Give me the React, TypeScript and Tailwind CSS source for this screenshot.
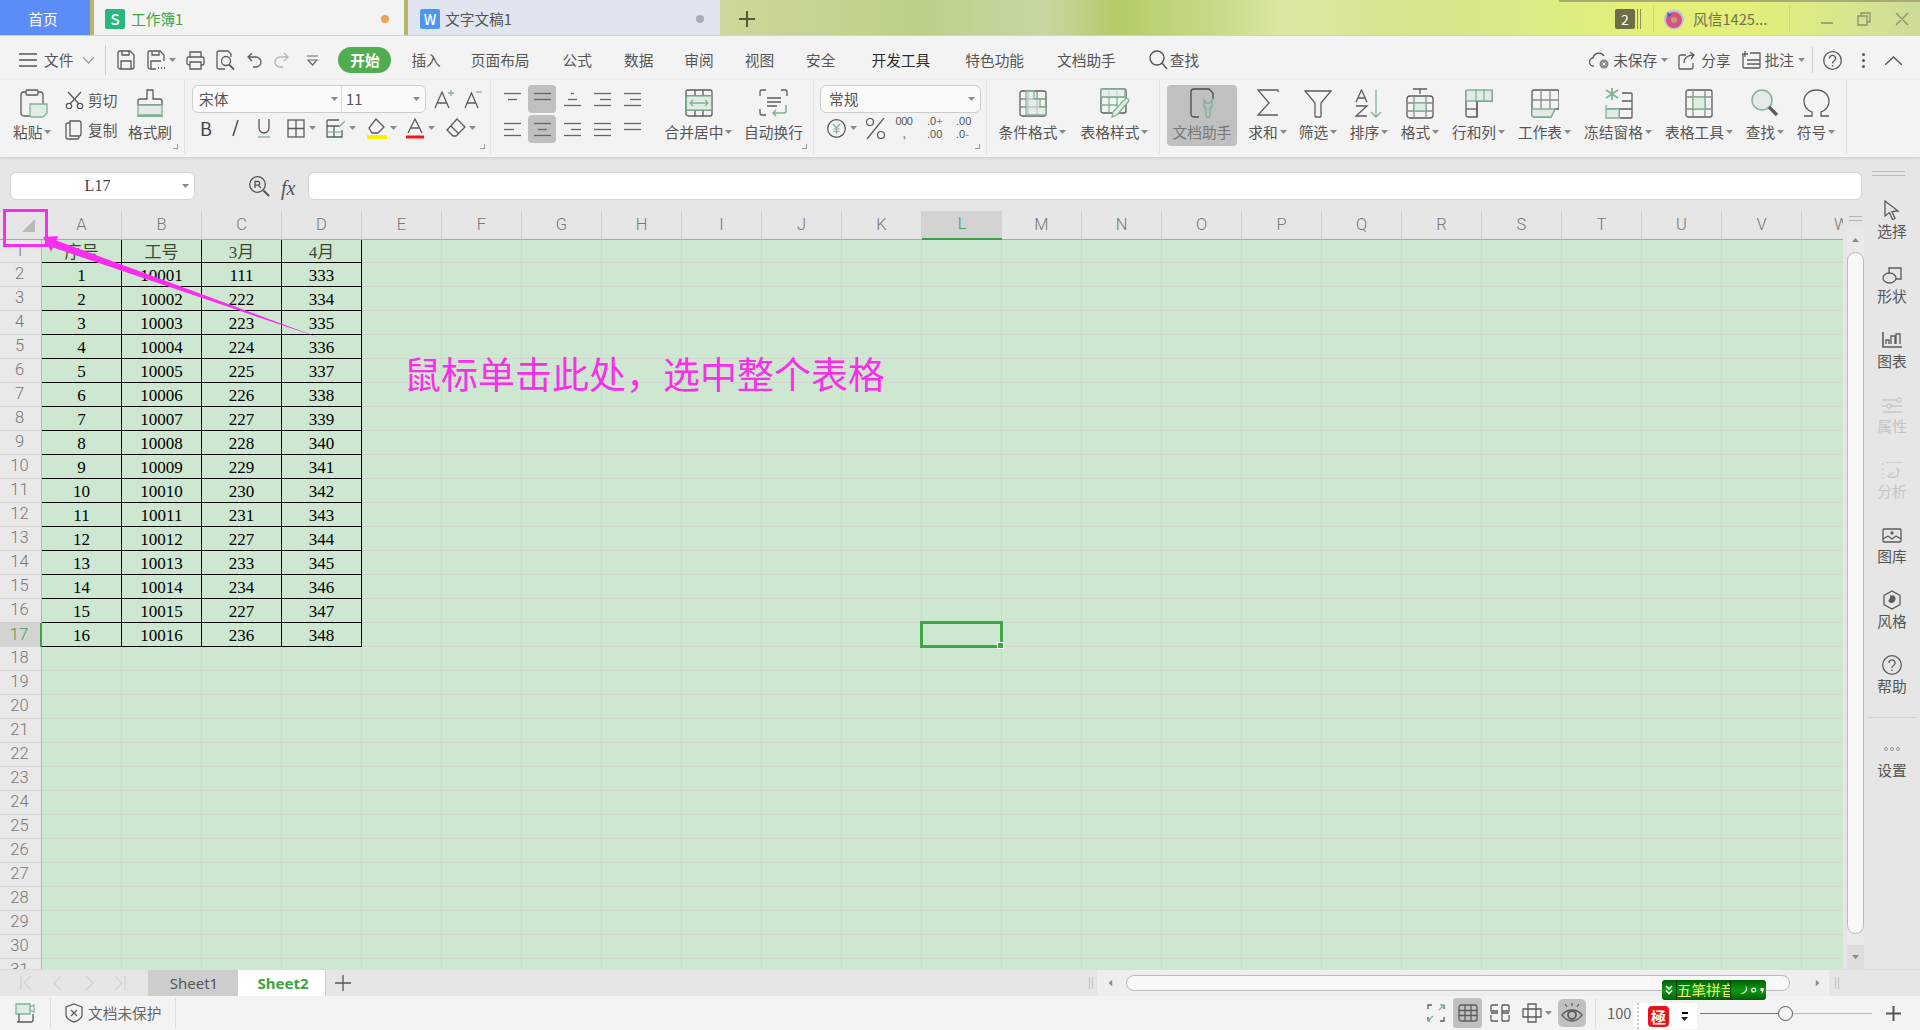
import type { ReactNode } from "react";

const GREEN = "#7fb394";
const GREY = "#5c5c5c";

function I({ w = 24, h = 24, children }: { w?: number; h?: number; children: ReactNode }) {
  return (
    <svg width={w} height={h} viewBox={`0 0 ${w} ${h}`} fill="none" stroke={GREY} strokeWidth={1.3} className="shrink-0">
      {children}
    </svg>
  );
}

function Caret({ color = "#8a8a8a" }: { color?: string }) {
  return (
    <svg width="7" height="4" viewBox="0 0 7 4" className="shrink-0">
      <path d="M0 0h7L3.5 4z" fill={color} />
    </svg>
  );
}

// ribbon icons
const PasteIcon = (
  <I w={28} h={29}>
    <rect x="1" y="3" width="22" height="24" rx="3" />
    <rect x="6" y="1" width="12" height="5" rx="1" fill="#f3f3f3" />
    <path d="M10 15h17v9l-4 4H12a2 2 0 0 1-2-2z" fill="#e4ebe6" stroke={GREEN} />
  </I>
);
const BrushIcon = (
  <I w={26} h={29}>
    <path d="M10 1h6v9h7a2 2 0 0 1 2 2v4H1v-4a2 2 0 0 1 2-2h7z" />
    <path d="M1 16h24v10H1z" fill="#e4ebe6" stroke={GREEN} />
    <path d="M0 27h26" stroke={GREEN} strokeWidth="2" />
  </I>
);
const MergeIcon = (
  <I w={28} h={28}>
    <rect x="1" y="1" width="26" height="26" rx="2" />
    <path d="M1 7h26M1 21h26M10 1v6M18 1v6M10 21v6M18 21v6" />
    <rect x="1.5" y="7" width="25" height="14" fill="#e4ebe6" stroke={GREEN} />
    <path d="M5 14h18M8 11l-3 3 3 3M20 11l3 3-3 3" stroke={GREEN} />
  </I>
);
const WrapIcon = (
  <I w={29} h={28}>
    <path d="M7 1H3a2 2 0 0 0-2 2v4M22 1h4a2 2 0 0 1 2 2v4M1 20v4a2 2 0 0 0 2 2h4" />
    <path d="M8 9h14M8 13h14M8 17h10" />
    <path d="M27 16v6a2 2 0 0 1-2 2H14M17 21l-3 3 3 3" stroke={GREEN} strokeWidth="1.6" />
  </I>
);
const CondIcon = (
  <I w={28} h={27}>
    <rect x="1" y="1" width="26" height="25" rx="2" />
    <path d="M1 9h26M1 17h26M9 1v25M18 1v25" stroke="#8a8a8a" />
    <path d="M7 1h8v8h6v8h6v8H7z" fill="#dfeae3" fillOpacity=".6" stroke={GREEN} />
  </I>
);
const StyleIcon = (
  <I w={30} h={30}>
    <rect x="1" y="1" width="25" height="24" rx="2" />
    <path d="M1 9h25M1 17h17M9 1v24M17 1v18" stroke={GREEN} />
    <path d="M1 1h24v8H1z" fill="#e4ebe6" fillOpacity=".7" stroke={GREEN} />
    <path d="M28 11c1 1 1 2 0 3L17 27l-5 2 1-5 12-13c1-1 2-1 3 0z" fill="#e4ebe6" stroke={GREEN} />
  </I>
);
const HelperIcon = (
  <I w={25} h={30}>
    <path d="M9 29H4a3 3 0 0 1-3-3V4a3 3 0 0 1 3-3h15l4 4v6" stroke="#4a4a4a" />
    <path d="M15 12v5c0 2 1 3 2 3v7a2 2 0 0 0 4 0v-7c1 0 2-1 2-3v-5l-2 3h-4z" stroke={GREEN} strokeWidth="1.5" transform="translate(-1 0)" />
  </I>
);
const SigmaIcon = (
  <I w={24} h={28}>
    <path d="M22 3V1H2l11 13L2 26h20" />
  </I>
);
const FunnelIcon = (
  <I w={28} h={29}>
    <path d="M1 2h26L17 14v13a1 1 0 0 1-1 1h-4a1 1 0 0 1-1-1V14z" />
  </I>
);
const SortIcon = (
  <I w={28} h={29}>
    <path d="M1 13L6.500 1 12 13M3 9h7" />
    <path d="M1 17h11L1 27h11" />
    <path d="M21 1v27M16 23l5 5 5-5" stroke={GREEN} />
  </I>
);
const FormatIcon = (
  <I w={28} h={31}>
    <path d="M7 1h14M14 1v5" />
    <rect x="1" y="8" width="26" height="22" rx="3" />
    <path d="M1 15h26M1 23h26M8 8v22M20 8v22" stroke="#8a8a8a" />
    <rect x="8" y="15" width="12" height="8" fill="#dfeae3" stroke={GREEN} />
  </I>
);
const RowColIcon = (
  <I w={28} h={30}>
    <path d="M3 3h24v10H12v16H3a2 2 0 0 1-2-2V3z" />
    <path d="M3 2h24v11H1V4a2 2 0 0 1 2-2z" fill="#e4ebe6" stroke={GREEN} />
    <path d="M11 2v11M19 2v11" stroke={GREEN} />
    <path d="M1 21h11" />
    <path d="M12 13v16" />
  </I>
);
const SheetIcon = (
  <I w={28} h={29}>
    <path d="M3 1h23a2 2 0 0 1 2 2v16a1 1 0 0 1-1 1h-3l-4 8H3a2 2 0 0 1-2-2V3a2 2 0 0 1 2-2z" />
    <path d="M1 11h27M10 1v19M19 1v19" stroke="#8a8a8a" />
    <path d="M1 20h23l-4 8H3a2 2 0 0 1-2-2z" fill="#e4ebe6" stroke={GREEN} />
  </I>
);
const FreezeIcon = (
  <I w={30} h={32}>
    <path d="M9 1v12M3 3l12 8M15 3L3 11" stroke={GREEN} strokeWidth="1.8" />
    <path d="M19 6h9a1 1 0 0 1 1 1v23a1 1 0 0 1-1 1H17" />
    <path d="M19 14h10M3 22h26M16 22v9" />
    <path d="M3 18v13h13V22H3" fill="#e4ebe6" stroke={GREEN} />
  </I>
);
const ToolsIcon = (
  <I w={28} h={29}>
    <rect x="1" y="1" width="26" height="27" rx="2" />
    <path d="M1 8h26M1 20h26M8 1v27M20 1v27" stroke="#8a8a8a" />
    <rect x="8" y="8" width="12" height="12" fill="#dfeae3" stroke={GREEN} />
  </I>
);
const FindIcon = (
  <I w={28} h={29}>
    <circle cx="11" cy="11" r="10" fill="#e4ebe6" stroke={GREEN} strokeWidth="1.5" />
    <path d="M18 18l8 8" strokeWidth="3.200" />
  </I>
);
const OmegaIcon = (
  <I w={27} h={28}>
    <path d="M1 27h8v-4C4 21 1 17 1 12 1 6 6 1 13.500 1S26 6 26 12c0 5-3 9-8 11v4h8" />
  </I>
);

// one big ribbon button, icon over label
function BigTool({ icon, label, caret = true, className }: { icon: ReactNode; label: string; caret?: boolean; className: string }) {
  return (
    <div className={`flex flex-col items-center shrink-0 ${className}`}>
      <div className="h-[30px] flex items-center justify-center">{icon}</div>
      <div className="mt-[4px] h-[20px] flex items-center gap-[2px] whitespace-nowrap">
        <span>{label}</span>
        {caret && <Caret />}
      </div>
    </div>
  );
}

function DialogCorner({ className }: { className: string }) {
  return <div className={`absolute w-[5px] h-[5px] border-r border-b border-[#9a9a9a] ${className}`} />;
}

function AlignIcon({ lines, hl }: { lines: [number, number][]; hl?: boolean }) {
  return (
    <div className={`w-[28px] h-[28px] rounded-[4px] flex items-center justify-center ${hl ? "bg-[#c0c0c0]" : ""}`}>
      <svg width="19" height="19" viewBox="0 0 19 19" stroke="#666" strokeWidth="1.300">
        {lines.map(([a, b], i) => (
          <path key={i} d={`M${a} ${i * 6 + 3.5}H${b}`} />
        ))}
      </svg>
    </div>
  );
}

function TitleBar() {
  return (
    <div className="h-[36px] flex shrink-0 border-b border-[#c6d2e2] text-[14.7px]">
      <div className="w-[90px] bg-[#5c8df6] text-white flex items-center justify-center pt-[3px] pr-[4px]">首页</div>
      <div className="w-[4px] bg-[#b3b767]" />
      <div className="w-[310px] bg-[#f3f3f3] flex items-center pl-[11px] pr-[15px] pt-[3px]">
        <div className="w-[20px] h-[20px] rounded-[2px] bg-[#27b77f] text-white flex items-center justify-center text-[15px] font-medium">S</div>
        <span className="ml-[6px] text-[#3ca83f]">工作簿1</span>
        <div className="ml-auto w-[8px] h-[8px] rounded-full bg-[#eba05c]" />
      </div>
      <div className="w-[4px] bg-[#b3b767]" />
      <div className="w-[312px] bg-[#e1e5ef] flex items-center pl-[12px] pr-[16px] pt-[3px] text-[#555]">
        <div className="w-[20px] h-[20px] rounded-[2px] bg-[#4b96f3] text-white flex items-center justify-center text-[14px] font-medium">W</div>
        <span className="ml-[5px]">文字文稿1</span>
        <div className="ml-auto w-[8px] h-[8px] rounded-full bg-[#a9acb4]" />
      </div>
      <div className="flex-1 relative flex items-center pt-[3px] bg-[linear-gradient(90deg,#ccd89a_0%,#bcd08a_17%,#c8d7a3_27%,#b4cb68_33%,#c8dc8a_42%,#dbe9a6_47%,#d4e68c_57%,#d9e98a_65%,#e5f078_77%,#e3ef78_86%,#d8e68e_94%,#ccdb98_100%)]">
        <svg width="16" height="16" viewBox="0 0 16 16" stroke="#555a36" strokeWidth="2" className="ml-[19px]">
          <path d="M8 0v16M0 8h16" />
        </svg>
        <div className="absolute top-0 right-0 w-[361px] h-[2px] bg-[#a9aa78]" />
        <div className="ml-auto flex items-center">
          <div className="w-[20px] h-[20px] rounded-[2px] bg-[#6d6d48] text-white flex items-center justify-center text-[14px]">2</div>
          <div className="ml-[2px] w-[4px] h-[20px] border-x border-[#8d8f5a]" />
          <div className="ml-[12px] w-px h-[26px] bg-[#c9d67c]" />
          <svg width="20" height="21" viewBox="0 0 20 21" className="ml-[10px]">
            <circle cx="10" cy="10.500" r="10" fill="#b9c3d9" />
            <circle cx="10" cy="11" r="8" fill="#d9517f" />
            <circle cx="10" cy="11" r="3" fill="#b5a37c" />
            <path d="M3 3l5 3-4 2z" fill="#3e62b8" />
          </svg>
          <span className="ml-[9px] w-[78px] text-[#6e7350] whitespace-nowrap">风信1425...</span>
          <div className="ml-[18px] w-px h-[26px] bg-[#c9d67c]" />
          <svg width="98" height="16" viewBox="0 0 98 16" fill="none" stroke="#8c9070" strokeWidth="1.300" className="ml-[30px] mr-[2px]">
            <path d="M1 12h12M38 5h9v9h-9zM41 5V2h9v9h-3M76 2l12 12M88 2L76 14" />
          </svg>
        </div>
      </div>
    </div>
  );
}

function MenuRow() {
  return (
    <div className="h-[44px] bg-[#f3f3f3] flex items-center shrink-0 pt-[4px]">
      <svg width="18" height="14" viewBox="0 0 18 14" stroke="#555" strokeWidth="1.300" className="ml-[19px]">
        <path d="M0 1h18M0 7h18M0 13h18" />
      </svg>
      <span className="ml-[7px]">文件</span>
      <svg width="11" height="7" viewBox="0 0 11 7" fill="none" stroke="#999" strokeWidth="1.200" className="ml-[10px]">
        <path d="M0 0l5.500 6L11 0" />
      </svg>
      <div className="ml-[11px] w-px h-[30px] bg-[#cfcfcf]" />
      <div className="ml-[11px] flex items-center">
        <I w={18} h={20}>
          <path d="M3 1h10l4 4v12a2 2 0 0 1-2 2H3a2 2 0 0 1-2-2V3a2 2 0 0 1 2-2z" />
          <path d="M4 19v-8h10v8M5 1v4h7V1" />
        </I>
        <div className="ml-[12px]">
          <I w={18} h={20}>
            <path d="M9 19H3a2 2 0 0 1-2-2V3a2 2 0 0 1 2-2h10l4 4v6" />
            <path d="M4 19v-8h10M5 1v4h7V1" />
            <path d="M11 18h1M14 18h1M17 18h1" strokeWidth="2" />
          </I>
        </div>
        <div className="ml-[4px]"><Caret /></div>
        <div className="ml-[10px]">
          <I w={19} h={19}>
            <path d="M4 6V1h11v5M4 14H3a2 2 0 0 1-2-2V8a2 2 0 0 1 2-2h13a2 2 0 0 1 2 2v4a2 2 0 0 1-2 2h-1" />
            <path d="M4 11h11v7H4z" />
          </I>
        </div>
        <div className="ml-[11px]">
          <I w={19} h={20}>
            <path d="M9 19H3a2 2 0 0 1-2-2V3a2 2 0 0 1 2-2h9l3 3v3" />
            <circle cx="10" cy="11" r="4.500" />
            <path d="M13 14.500l5 5" strokeWidth="1.800" />
          </I>
        </div>
        <div className="ml-[12px]">
          <I w={15} h={17}>
            <path d="M5 1L1 5l4 4" />
            <path d="M1 5h8a5 5 0 0 1 0 10H6" />
          </I>
        </div>
        <div className="ml-[12px] opacity-40">
          <I w={15} h={17}>
            <path d="M10 1l4 4-4 4" />
            <path d="M14 5H6a5 5 0 0 0 0 10h3" />
          </I>
        </div>
        <svg width="11" height="11" viewBox="0 0 11 11" fill="none" stroke="#666" strokeWidth="1.200" className="ml-[18px]">
          <path d="M0 1h11M1 5l4.500 5L10 5z" />
        </svg>
      </div>
      <div className="ml-[20px] w-[53px] h-[26px] rounded-full bg-[#50ad52] text-white font-bold flex items-center justify-center">开始</div>
      <span className="ml-[20px]">插入</span>
      <span className="ml-[30px]">页面布局</span>
      <span className="ml-[33px]">公式</span>
      <span className="ml-[32px]">数据</span>
      <span className="ml-[31px]">审阅</span>
      <span className="ml-[31px]">视图</span>
      <span className="ml-[32px]">安全</span>
      <span className="ml-[36px] text-[#2c2c2c]">开发工具</span>
      <span className="ml-[35px]">特色功能</span>
      <span className="ml-[33px]">文档助手</span>
      <svg width="19" height="20" viewBox="0 0 19 20" fill="none" stroke="#555" strokeWidth="1.400" className="ml-[33px]">
        <circle cx="8" cy="8" r="7" />
        <path d="M13 13l5 6" />
      </svg>
      <span className="ml-[2px]">查找</span>

      <div className="ml-auto flex items-center">
        <svg width="21" height="18" viewBox="0 0 21 18" fill="none" stroke="#555" strokeWidth="1.300">
          <path d="M5 15a4 4 0 0 1-1-8 6 6 0 0 1 11-2" />
          <circle cx="15" cy="13" r="4.500" fill="#8a8a8a" stroke="none" />
          <path d="M13.500 11.500l3 3M16.500 11.500l-3 3" stroke="#fff" strokeWidth="1" />
        </svg>
        <span className="ml-[3px]">未保存</span>
        <div className="ml-[4px]"><Caret /></div>
        <div className="ml-[10px]">
          <I w={18} h={19}>
            <path d="M8 4H3a2 2 0 0 0-2 2v11a1 1 0 0 0 1 1h11a2 2 0 0 0 2-2v-4" />
            <path d="M6 12c0-5 4-8 10-8M12 1l4 3-3 4" />
          </I>
        </div>
        <span className="ml-[5px]">分享</span>
        <div className="ml-[11px]">
          <I w={19} h={18}>
            <path d="M1 4v12a1 1 0 0 0 1 1h15a1 1 0 0 0 1-1V2H8" />
            <path d="M0 3h6M3 0v6" />
            <path d="M5 9h13M5 13h13" />
          </I>
        </div>
        <span className="ml-[4px]">批注</span>
        <div className="ml-[4px]"><Caret /></div>
        <div className="ml-[7px] w-px h-[26px] bg-[#cfcfcf]" />
        <div className="ml-[10px]">
          <I w={19} h={19}>
            <circle cx="9.500" cy="9.500" r="8.800" />
            <path d="M6.500 7.500a3 3 0 1 1 4.500 2.500c-1 .6-1.500 1-1.500 2.500M9.500 14v1.500" />
          </I>
        </div>
        <svg width="3" height="15" viewBox="0 0 3 15" fill="#555" className="ml-[20px]">
          <circle cx="1.500" cy="1.500" r="1.500" />
          <circle cx="1.500" cy="7.500" r="1.500" />
          <circle cx="1.500" cy="13.500" r="1.500" />
        </svg>
        <svg width="17" height="9" viewBox="0 0 17 9" fill="none" stroke="#555" strokeWidth="1.300" className="ml-[20px] mr-[18px]">
          <path d="M0 9l8.500-8L17 9" />
        </svg>
      </div>
    </div>
  );
}

function Ribbon() {
  return (
    <div className="h-[77px] bg-[#f3f3f3] flex shrink-0 pb-[3px] shadow-[0_1px_3px_rgba(0,0,0,0.12)] relative">
      {/* clipboard */}
      <div className="w-[185px] shrink-0 relative border-r border-[#e2e2e2] flex pl-[13px] pt-[8px]">
        <div className="w-[40px] flex flex-col items-start">
          <div className="h-[30px] pl-[7px] flex items-center">{PasteIcon}</div>
          <div className="mt-[4px] h-[20px] flex items-center gap-[2px]">
            <span>粘贴</span>
            <Caret />
          </div>
        </div>
        <div className="ml-[12px] w-[55px] flex flex-col">
          <div className="h-[22px] mt-[1px] flex items-center gap-[4px]">
            <svg width="19" height="18" viewBox="0 0 19 18" fill="none" stroke="#555" strokeWidth="1.200" className="shrink-0">
              <path d="M3 1l11 12M16 1L5 13" />
              <circle cx="4" cy="15" r="2.700" />
              <circle cx="15" cy="15" r="2.700" />
            </svg>
            <span className="whitespace-nowrap">剪切</span>
          </div>
          <div className="h-[22px] mt-[8px] flex items-center gap-[5px]">
            <I w={18} h={20}>
              <path d="M5 1h9a2 2 0 0 1 2 2v11a2 2 0 0 1-2 2H5z" />
              <path d="M5 3H3a2 2 0 0 0-2 2v12a2 2 0 0 0 2 2h9a2 2 0 0 0 2-2v-1" />
            </I>
            <span className="whitespace-nowrap">复制</span>
          </div>
        </div>
        <BigTool icon={BrushIcon} label="格式刷" caret={false} className="ml-[8px] w-[44px]" />
        <DialogCorner className="right-[6px] bottom-[5px]" />
      </div>

      {/* font */}
      <div className="w-[306px] shrink-0 relative border-r border-[#e2e2e2] pt-[5px] pl-[7px]">
        <div className="flex items-center">
          <div className="w-[234px] h-[28px] rounded-[6px] border border-[#cdcdcd] bg-[#fafafa] flex items-center">
            <span className="ml-[6px] w-[132px]">宋体</span>
            <Caret />
            <div className="ml-[3px] w-px h-full bg-[#dedede]" />
            <span className="ml-[4px] w-[67px]">11</span>
            <Caret />
          </div>
          <div className="ml-[8px]">
            <I w={20} h={20}>
              <path d="M1 19L8 3l7 16M3.500 14h9" />
              <path d="M14 4h6M17 1v6" stroke={GREEN} />
            </I>
          </div>
          <div className="ml-[10px]">
            <I w={18} h={20}>
              <path d="M1 19L7.500 4 14 19M3.500 14h8" />
              <path d="M12 3h6" stroke={GREEN} />
            </I>
          </div>
        </div>
        <div className="flex items-center h-[24px] mt-[3px] pl-[8px]">
          <span className="text-[#444] text-[18px] leading-none">B</span>
          <svg width="9" height="18" viewBox="0 0 9 18" fill="none" stroke="#555" strokeWidth="1.500" className="ml-[19px]">
            <path d="M7 1L2 17" />
          </svg>
          <svg width="12" height="20" viewBox="0 0 12 20" fill="none" strokeWidth="1.300" className="ml-[18px]">
            <path d="M1 1v9a5 5 0 0 0 10 0V1" stroke="#555" />
            <path d="M0 19h12" stroke={GREEN} />
          </svg>
          <div className="ml-[17px]">
            <I w={18} h={19}>
              <rect x="1" y="1" width="16" height="17" />
              <path d="M1 9.500h16M9 1v17" />
            </I>
          </div>
          <div className="ml-[4px]"><Caret /></div>
          <div className="ml-[10px]">
            <I w={20} h={19}>
              <path d="M13 1H2a1 1 0 0 0-1 1v16h15V11" />
              <path d="M1 7h12M8 7v11" />
              <path d="M1 13h15" stroke={GREEN} />
              <path d="M13 8l6-6" stroke={GREEN} />
            </I>
          </div>
          <div className="ml-[3px]"><Caret /></div>
          <div className="ml-[11px]">
            <I w={20} h={21}>
              <path d="M9 1l8 8-6 6H5L2 10z" />
              <path d="M0 17h20v4H0z" fill="#ffef00" stroke="none" />
            </I>
          </div>
          <div className="ml-[3px]"><Caret /></div>
          <div className="ml-[9px]">
            <I w={18} h={21}>
              <path d="M2 15L9 1l7 14M4.500 10h9" />
              <path d="M0 17.500h18v3H0z" fill="#f4141c" stroke="none" />
            </I>
          </div>
          <div className="ml-[4px]"><Caret /></div>
          <div className="ml-[11px]">
            <I w={20} h={20}>
              <path d="M11 1l8 8-9 9H7l-6-6z" />
              <path d="M5 8l8 8" />
            </I>
          </div>
          <div className="ml-[3px]"><Caret /></div>
        </div>
        <DialogCorner className="right-[5px] bottom-[5px]" />
      </div>

      {/* alignment */}
      <div className="w-[323px] shrink-0 relative border-r border-[#e2e2e2] pt-[5px] pl-[7px] flex">
        <div className="w-[150px] flex flex-col gap-[2px]">
          <div className="flex items-center gap-[2px] h-[28px]">
            <AlignIcon lines={[[1, 18], [5, 14]]} />
            <AlignIcon lines={[[1, 18], [1, 18]]} hl />
            <AlignIcon lines={[[8, 11], [5, 14], [1, 18]]} />
            <AlignIcon lines={[[1, 18], [7, 18], [1, 18]]} />
            <AlignIcon lines={[[1, 18], [7, 18], [1, 18]]} />
          </div>
          <div className="flex items-center gap-[2px] h-[28px]">
            <AlignIcon lines={[[1, 18], [1, 11], [1, 18]]} />
            <AlignIcon lines={[[1, 18], [5, 14], [1, 18]]} hl />
            <AlignIcon lines={[[1, 18], [8, 18], [1, 18]]} />
            <AlignIcon lines={[[1, 18], [1, 18], [1, 18]]} />
            <AlignIcon lines={[[1, 18], [1, 18]]} />
          </div>
        </div>
        <div className="flex pt-[3px] ml-[14px]">
          <BigTool icon={MergeIcon} label="合并居中" className="w-[73px]" />
          <BigTool icon={WrapIcon} label="自动换行" caret={false} className="ml-[9px] w-[59px]" />
        </div>
        <DialogCorner className="right-[6px] bottom-[5px]" />
      </div>

      {/* number */}
      <div className="w-[173px] shrink-0 relative border-r border-[#e2e2e2] pt-[5px] pl-[6px]">
        <div className="w-[161px] h-[28px] rounded-[6px] border border-[#cdcdcd] bg-[#fafafa] flex items-center pl-[8px]">
          <span className="w-[139px]">常规</span>
          <Caret />
        </div>
        <div className="flex items-center h-[24px] mt-[3px] pl-[7px] [font-family:'Liberation_Sans',sans-serif] text-[11px] leading-[13px] text-[#555]">
          <svg width="19" height="19" viewBox="0 0 19 19" fill="none" stroke="#555" strokeWidth="1.200">
            <circle cx="9.500" cy="9.500" r="8.800" />
            <path d="M6 5l3.500 4L13 5M9.500 9v6M6.500 10h6M6.500 12.500h6" stroke={GREEN} />
          </svg>
          <div className="ml-[4px]"><Caret /></div>
          <svg width="19" height="21" viewBox="0 0 19 21" fill="none" stroke="#555" strokeWidth="1.200" className="ml-[9px]">
            <ellipse cx="4" cy="4" rx="3.500" ry="3.500" />
            <ellipse cx="15" cy="17" rx="3.500" ry="3.500" />
            <path d="M18 0L1 21" />
          </svg>
          <div className="ml-[10px] w-[18px] text-center tracking-[-0.5px]">
            <div>000</div>
            <div className="text-[#5f9e78] font-bold">,</div>
          </div>
          <div className="ml-[14px] w-[18px] whitespace-nowrap">
            <div>.0<span className="text-[#5f9e78]">+</span></div>
            <div>.00</div>
          </div>
          <div className="ml-[11px] w-[18px] whitespace-nowrap">
            <div>.00</div>
            <div>.0<span className="text-[#5f9e78]">-</span></div>
          </div>
        </div>
        <DialogCorner className="right-[6px] bottom-[5px]" />
      </div>

      {/* table style */}
      <div className="w-[173px] shrink-0 border-r border-[#e2e2e2] pt-[8px] pl-[11px] flex gap-[13px]">
        <BigTool icon={CondIcon} label="条件格式" className="w-[69px]" />
        <BigTool icon={StyleIcon} label="表格样式" className="w-[69px]" />
      </div>

      {/* the rest */}
      <div className="w-[687px] shrink-0 border-r border-[#e2e2e2] pl-[7px] pt-[5px] flex gap-[11px]">
        <div className="w-[70px] h-[61px] rounded-[4px] bg-[#c0c0c0] pt-[3px] shrink-0">
          <BigTool icon={HelperIcon} label="文档助手" caret={false} className="w-[70px] text-[#777]" />
        </div>
        <div className="pt-[3px]"><BigTool icon={SigmaIcon} label="求和" className="w-[39px]" /></div>
        <div className="pt-[3px]"><BigTool icon={FunnelIcon} label="筛选" className="w-[40px]" /></div>
        <div className="pt-[3px]"><BigTool icon={SortIcon} label="排序" className="w-[40px]" /></div>
        <div className="pt-[3px]"><BigTool icon={FormatIcon} label="格式" className="w-[40px]" /></div>
        <div className="pt-[3px]"><BigTool icon={RowColIcon} label="行和列" className="w-[55px]" /></div>
        <div className="pt-[3px]"><BigTool icon={SheetIcon} label="工作表" className="w-[55px]" /></div>
        <div className="pt-[3px]"><BigTool icon={FreezeIcon} label="冻结窗格" className="w-[70px]" /></div>
        <div className="pt-[3px]"><BigTool icon={ToolsIcon} label="表格工具" className="w-[70px]" /></div>
        <div className="pt-[3px]"><BigTool icon={FindIcon} label="查找" className="w-[40px]" /></div>
        <div className="pt-[3px]"><BigTool icon={OmegaIcon} label="符号" className="w-[40px]" /></div>
      </div>
    </div>
  );
}

function FormulaBar() {
  return (
    <div className="h-[54px] flex items-start pt-[15px] pl-[10px] pr-[2px] shrink-0">
      <div className="w-[185px] h-[28px] rounded-[6px] border border-[#d6d6d6] bg-white flex items-center pr-[5px] shrink-0">
        <span className="flex-1 text-center pl-[2px] [font-family:'Liberation_Serif',serif] text-[16px] text-[#444]">L17</span>
        <Caret />
      </div>
      <svg width="21" height="21" viewBox="0 0 21 21" fill="none" stroke="#555" strokeWidth="1.300" className="ml-[54px] mt-[4px] shrink-0">
        <circle cx="8.500" cy="8.500" r="7.800" />
        <path d="M6 12V5.500h3a1.800 1.800 0 0 1 0 3.600H6M9 9l3 3" />
        <path d="M14.500 14.500l5.500 5.500" strokeWidth="2" />
      </svg>
      <span className="ml-[11px] mt-[1px] w-[20px] [font-family:'Liberation_Serif',serif] italic text-[20px] text-[#555]">fx</span>
      <div className="ml-[7px] flex-1 h-[28px] rounded-[6px] border border-[#d6d6d6] bg-white" />
    </div>
  );
}

const COLS = "ABCDEFGHIJKLMNOPQRSTUVW".split("");
const TABLE: string[][] = [
  ["序号", "工号", "3月", "4月"],
  ["1", "10001", "111", "333"],
  ["2", "10002", "222", "334"],
  ["3", "10003", "223", "335"],
  ["4", "10004", "224", "336"],
  ["5", "10005", "225", "337"],
  ["6", "10006", "226", "338"],
  ["7", "10007", "227", "339"],
  ["8", "10008", "228", "340"],
  ["9", "10009", "229", "341"],
  ["10", "10010", "230", "342"],
  ["11", "10011", "231", "343"],
  ["12", "10012", "227", "344"],
  ["13", "10013", "233", "345"],
  ["14", "10014", "234", "346"],
  ["15", "10015", "227", "347"],
  ["16", "10016", "236", "348"],
];
const ROWS = Array.from({ length: 31 }, (_, i) => i);

function Sheet() {
  return (
    <div className="w-[1843px] h-full overflow-hidden shrink-0">
      <div className="w-[1882px] grid grid-cols-[42px_repeat(23,80px)] grid-rows-[29px_23px_repeat(30,24px)] [font-family:'Roboto',sans-serif] font-light text-[16.5px] text-[#777]">
        <div className="border-b border-[#a8a8a8] bg-[#e6e6e6] relative">
          <div className="absolute left-[22px] top-[8px] w-0 h-0 border-l-[13px] border-l-transparent border-b-[13px] border-b-[#b9b9b9]" />
        </div>
        {COLS.map((c) => (
          <div
            key={c}
            className={
              c === "L"
                ? "flex items-center justify-center bg-[#d3d3d3] border-b-2 border-[#3c9f42] text-[#3c9f42]"
                : "flex items-center justify-center bg-[#e6e6e6] border-b border-r border-b-[#a8a8a8] border-r-[#cfcfcf]"
            }
          >
            {c}
          </div>
        ))}
        {ROWS.map((r) => (
          <Row key={r} r={r} />
        ))}
      </div>
    </div>
  );
}

function Row({ r }: { r: number }) {
  const data = TABLE[r];
  return (
    <>
      <div
        className={
          r === 16
            ? "flex items-center justify-center bg-[#d3d3d3] border-r-2 border-[#3c9f42] text-[#3c9f42] pr-[2px]"
            : "flex items-center justify-center bg-[#e9e9e9] border-b border-r border-b-[#d2d2d2] border-r-[#b5b5b5] pr-[2px]"
        }
      >
        {r + 1}
      </div>
      {COLS.map((c, i) => {
        const inTable = data && i < 4;
        const isSel = r === 16 && c === "L";
        return (
          <div
            key={c}
            className={
              inTable
                ? `border-r border-b border-black bg-[#cee7d0] flex items-center justify-center pt-[3px] [font-family:'Liberation_Serif','Noto_Sans_CJK_SC',serif] font-normal text-[17px] ${
                    r === 0 ? "text-[#3d4a32]" : "text-black"
                  }`
                : "border-r border-b border-[#d4d6d4] bg-[#cee7d0] relative"
            }
          >
            {inTable ? data[i] : null}
            {isSel && (
              <div className="absolute -left-[2px] -top-[2px] w-[83px] h-[27px] border-[3px] border-[#3fa645] z-10">
                <div className="absolute -right-[4px] -bottom-[4px] w-[7px] h-[7px] bg-[#3fa645] border border-white" />
              </div>
            )}
          </div>
        );
      })}
    </>
  );
}

function VScroll() {
  return (
    <div className="w-[21px] h-full pl-[4px] flex flex-col shrink-0">
      <div className="h-[17px] pt-[5px] flex flex-col gap-[3px] px-[2px] shrink-0">
        <div className="h-px bg-[#b5b5b5]" />
        <div className="h-px bg-[#b5b5b5]" />
      </div>
      <div className="flex-1 bg-[#e9e9e9] flex flex-col items-center">
        <div className="h-[24px] flex items-center"><div className="rotate-180"><Caret color="#8a8a8a" /></div></div>
        <div className="w-full h-[682px] bg-[#f8f8f8] border border-[#b9b9b9] rounded-full shrink-0" />
        <div className="mt-auto h-[24px] w-full bg-[#dedede] flex items-center justify-center"><Caret color="#8a8a8a" /></div>
      </div>
    </div>
  );
}

const SIDE: { label: string; off?: boolean; icon: ReactNode }[] = [
  {
    label: "选择",
    icon: (
      <I w={16} h={20}>
        <path d="M1 1l13 10-6 .5 3 7-2.500 1-3-7L1 16z" />
      </I>
    ),
  },
  {
    label: "形状",
    icon: (
      <I w={20} h={17}>
        <path d="M7 6V1h12v11h-5" />
        <ellipse cx="7.500" cy="11" rx="6.500" ry="5" />
      </I>
    ),
  },
  {
    label: "图表",
    icon: (
      <I w={20} h={16}>
        <path d="M1 0v15h19" strokeWidth="1.600" />
        <path d="M4 12V8h3v4M9 12V4h4v8M14 12V2h4v10" />
      </I>
    ),
  },
  {
    label: "属性",
    off: true,
    icon: (
      <I w={20} h={16}>
        <g stroke="#c8c8c8">
          <path d="M0 3h15M0 9h5M9 9h11M1 15h19" />
          <circle cx="17" cy="3" r="2" />
          <circle cx="7" cy="9" r="2" />
        </g>
      </I>
    ),
  },
  {
    label: "分析",
    off: true,
    icon: (
      <I w={20} h={17}>
        <g stroke="#c8c8c8">
          <path d="M1 1v2M1 6v2M1 11v2M1 15v2M4 0h16M5 14l6-3v-1M14 6l4 3M16 6v6a3 3 0 0 1-3 3H6" />
        </g>
      </I>
    ),
  },
  {
    label: "图库",
    icon: (
      <I w={20} h={15}>
        <rect x="1" y="1" width="18" height="13" rx="1" />
        <circle cx="10" cy="5" r="1" fill={GREY} />
        <path d="M1 11l5-3 4 3 4-3 5 3" />
      </I>
    ),
  },
  {
    label: "风格",
    icon: (
      <I w={18} h={20}>
        <path d="M9 1l8 4.500v9L9 19l-8-4.500v-9z" />
        <path d="M6 11c1 2 5 2 6-2 0-1-1-3-2-3 0 2-1 1-2 0 0 2-1 3-2 5z" fill={GREY} />
      </I>
    ),
  },
  {
    label: "帮助",
    icon: (
      <I w={20} h={20}>
        <circle cx="10" cy="10" r="9.300" />
        <path d="M7 8a3 3 0 1 1 4.500 2.500c-1 .6-1.500 1-1.500 2.500M10 14.500V16" />
      </I>
    ),
  },
];

function SideBar() {
  return (
    <div className="w-[56px] shrink-0 flex flex-col items-center relative">
      <div className="absolute top-[14px] left-[8px] w-[33px] flex flex-col gap-[3px]">
        <div className="h-px bg-[#bdbdbd]" />
        <div className="h-px bg-[#bdbdbd]" />
      </div>
      <div className="pt-[42px] flex flex-col items-center">
        {SIDE.map((s) => (
          <div key={s.label} className={`h-[65px] flex flex-col items-center ${s.off ? "text-[#c4c4c4]" : ""}`}>
            <div className="h-[22px] flex items-center">{s.icon}</div>
            <div className="h-[20px] leading-[20px]">{s.label}</div>
          </div>
        ))}
      </div>
      <div className="mt-[-2px] w-[49px] h-px bg-[#d2d2d2]" />
      <svg width="16" height="4" viewBox="0 0 16 4" fill="none" stroke="#999" className="mt-[29px]">
        <circle cx="2" cy="2" r="1.500" />
        <circle cx="8" cy="2" r="1.500" />
        <circle cx="14" cy="2" r="1.500" />
      </svg>
      <div className="mt-[9px] h-[20px] leading-[20px]">设置</div>
    </div>
  );
}

function SheetBar() {
  return (
    <div className="h-[27px] flex items-center shrink-0 bg-[#e6e6e6] border-t border-[#dcdcdc] relative">
      <svg width="106" height="14" viewBox="0 0 106 14" fill="none" stroke="#cfcfcf" strokeWidth="1.200" className="ml-[20px]">
        <path d="M1 0v14M11 0L4 7l7 7M41 0l-7 7 7 7M66 0l7 7-7 7M95 0l7 7-7 7M105 0v14" />
      </svg>
      <div className="ml-[22px] w-[90px] h-full bg-[#cdcdcd] flex items-center justify-center pl-[2px] [font-family:'Noto_Sans',sans-serif] text-[15px] text-[#555]">Sheet1</div>
      <div className="w-[88px] h-full bg-white border-r border-[#cfcfcf] flex items-center justify-center pl-[3px] [font-family:'Noto_Sans',sans-serif] text-[15px] font-bold text-[#3ba53f]">Sheet2</div>
      <svg width="16" height="16" viewBox="0 0 16 16" stroke="#555" strokeWidth="1.300" className="ml-[9px]">
        <path d="M8 0v16M0 8h16" />
      </svg>
      <div className="ml-[738px] w-[4px] h-[12px] border-x border-[#c4c4c4]" />
      <div className="ml-[4px] w-[732px] h-full bg-[#eeeeee] flex items-center">
        <div className="ml-[10px] rotate-90"><Caret /></div>
        <div className="ml-[12px] w-[664px] h-[16px] bg-[#f8f8f8] border border-[#b9b9b9] rounded-full" />
        <div className="ml-[24px] -rotate-90"><Caret /></div>
      </div>
      <div className="ml-[6px] w-[4px] h-[12px] border-x border-[#c4c4c4]" />
    </div>
  );
}

function StatusBar() {
  return (
    <div className="h-[34px] bg-[#f3f3f3] flex items-center shrink-0">
      <div className="ml-[15px]">
        <I w={20} h={20}>
          <path d="M1 1h14v10H1z" fill="#dfeae3" stroke={GREEN} />
          <path d="M15 4l4-2v7l-4-2" stroke={GREEN} />
          <path d="M4 11v6a2 2 0 0 1-2 2h14a2 2 0 0 0 2-2v-6" />
        </I>
      </div>
      <div className="ml-[15px] w-px h-[30px] bg-[#dfdfdf]" />
      <div className="ml-[14px]">
        <I w={18} h={20}>
          <path d="M9 1l8 3v8c0 3-4 6-8 7-4-1-8-4-8-7V4z" />
          <path d="M6 7l6 6M12 7l-6 6" />
        </I>
      </div>
      <span className="ml-[5px] text-[#666]">文档未保护</span>
      <div className="ml-[14px] w-px h-[30px] bg-[#dfdfdf]" />

      <div className="ml-auto flex items-center">
        <svg width="18" height="18" viewBox="0 0 18 18" fill="none" strokeWidth="1.300" stroke={GREY}>
          <path d="M1 5V1h4M13 17h4v-4M1 13v4M17 5V1" />
          <path d="M1 17l5-5M3 17H1v-2M17 1l-5 5M15 1h2v2M13 1h4" stroke={GREEN} />
        </svg>
        <div className="ml-[8px] w-[29px] h-[30px] rounded-[3px] bg-[#c0c0c0] flex items-center justify-center">
          <I w={20} h={18}>
            <rect x="1" y="1" width="18" height="16" rx="2" />
            <path d="M1 6.500h18M1 11.500h18M7 1v16M13 1v16" />
          </I>
        </div>
        <div className="ml-[8px]">
          <I w={20} h={18}>
            <path d="M8 1H2a1 1 0 0 0-1 1v5h7M12 1h6a1 1 0 0 1 1 1v5h-7M1 11v5a1 1 0 0 0 1 1h6M19 11v5a1 1 0 0 1-1 1h-6M8 9h-7M19 9h-7" />
            <path d="M12 1v16" />
          </I>
        </div>
        <div className="ml-[12px]">
          <I w={20} h={20}>
            <path d="M6 1h8v5h5v8h-5v5H6v-5H1V6h5z" />
            <path d="M6 6h8v8H6z" />
          </I>
        </div>
        <div className="ml-[3px]"><Caret /></div>
        <div className="ml-[6px] w-[28px] h-[28px] rounded-[5px] bg-[#c0c0c0] flex items-center justify-center">
          <I w={22} h={20}>
            <path d="M1 12c3-4 6-5 10-5s7 1 10 5c-3 4-6 6-10 6s-7-2-10-6z" />
            <circle cx="11" cy="12" r="4" strokeWidth="1.800" />
            <path d="M11 0v3M4 1l2 3M18 1l-2 3" />
          </I>
        </div>
        <div className="ml-[9px] w-px h-[30px] bg-[#dfdfdf]" />
        <span className="ml-[11px] w-[27px] text-[#666] overflow-hidden">100</span>
        <div className="w-[66px]" />
        <div className="w-[172px] h-[15px] flex items-center relative">
          <div className="w-[78px] h-px bg-[#777]" />
          <div className="w-[15px] h-[15px] rounded-full border border-[#555] bg-[#f3f3f3] shrink-0" />
          <div className="flex-1 h-px bg-[#bbb]" />
        </div>
        <svg width="15" height="15" viewBox="0 0 15 15" stroke="#555" strokeWidth="2" className="ml-[14px] mr-[19px]">
          <path d="M7.500 0v15M0 7.500h15" />
        </svg>
      </div>
    </div>
  );
}

// floating input method bar from the desktop, sits over the status bar
function ImeBar() {
  return (
    <>
      <div className="absolute left-[1662px] top-[980px] w-[104px] h-[20px] rounded-[3px] bg-[linear-gradient(180deg,#045c0a,#0a9a12_50%,#045c0a)] flex items-center text-[#f4f56a] text-[14.7px] leading-none z-20">
        <div className="w-[14px] flex justify-center">
          <svg width="8" height="10" viewBox="0 0 8 10" fill="none" stroke="#fff" strokeWidth="1.600">
            <path d="M1 1l3 3 3-3M1 5.500l3 3 3-3" />
          </svg>
        </div>
        <div className="w-px h-full bg-[#023d06]" />
        <span className="w-[54px] overflow-hidden whitespace-nowrap">五笔拼音</span>
        <div className="w-px h-full bg-[#023d06]" />
        <svg width="28" height="10" viewBox="0 0 28 10" className="ml-[8px]">
          <path d="M6 0a4.500 4.500 0 0 1-5 8 5 5 0 0 0 5-8z" fill="#fff" />
          <circle cx="15" cy="5" r="2" fill="none" stroke="#fff" strokeWidth="1.200" />
          <path d="M22 3h3v3l-2 3 .5-3H22z" fill="#fff" />
        </svg>
      </div>
      <div className="absolute left-[1634px] top-[1003px] w-[63px] h-[26px] bg-white flex items-center z-20">
        <div className="w-[4px] h-full ml-[3px] border-l-2 border-dotted border-[#ccc]" />
        <div className="ml-[7px] w-[21px] h-[21px] rounded-[4px] bg-[#e8141c] text-white text-[15px] leading-[21px] text-center font-bold">極</div>
        <div className="ml-[12px] flex flex-col items-center gap-[3px]">
          <div className="w-[6px] h-[2px] bg-black" />
          <Caret color="#222" />
        </div>
      </div>
    </>
  );
}

export default function App() {
  return (
    <div className="w-[1920px] h-[1030px] relative overflow-hidden flex flex-col bg-[#e6e6e6] text-[14.7px] text-[#555] [font-family:'Noto_Sans_CJK_SC','Noto_Sans',sans-serif]">
      <TitleBar />
      <MenuRow />
      <Ribbon />
      <div className="flex-1 flex min-h-0">
        <div className="flex-1 min-w-0 flex flex-col">
          <FormulaBar />
          <div className="flex-1 min-h-0 flex">
            <Sheet />
            <VScroll />
          </div>
        </div>
        <SideBar />
      </div>
      <SheetBar />
      <StatusBar />
      <ImeBar />

      {/* annotation drawn on top of the screenshot */}
      <div className="absolute left-[3px] top-[209px] w-[45px] h-[38px] border-[3px] border-[#f92df0] z-30" />
      <svg width="340" height="350" viewBox="0 0 340 350" className="absolute left-0 top-0 z-30">
        <path d="M43 237L58 236L56.500 240.500L320 338L53 247.500L51 251.500z" fill="#f92df0" />
      </svg>
      <div className="absolute left-[404px] top-[348px] text-[37px] leading-[50px] text-[#f92ee8] whitespace-nowrap z-30">鼠标单击此处，选中整个表格</div>
    </div>
  );
}
